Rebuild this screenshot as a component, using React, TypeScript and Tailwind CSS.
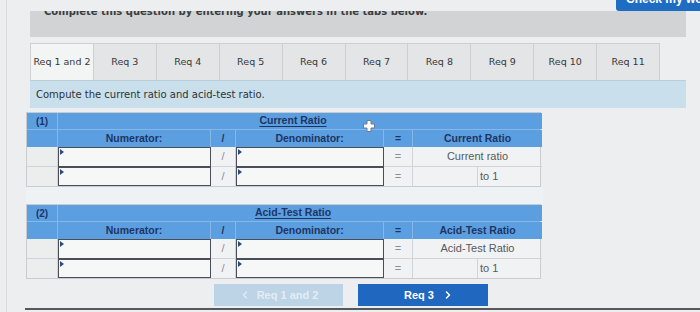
import { ChevronLeft, ChevronRight } from "lucide-react"

const tabs = ["Req 1 and 2", "Req 3", "Req 4", "Req 5", "Req 6", "Req 7", "Req 8", "Req 9", "Req 10", "Req 11"]

const cols = "grid grid-cols-[31px_153px_25px_148px_29px_65px_64px]"

function Field() {
  return (
    <div className="relative h-full border-[1.5px] border-[#4a4f57] bg-[#f6f7f7]">
      <span className="absolute left-[1px] top-[1px] h-0 w-0 border-y-[3px] border-l-[4px] border-y-transparent border-l-[#2d4a80]" />
    </div>
  )
}

function PlusIcon() {
  return (
    <svg width="14" height="14" viewBox="0 0 14 14">
      <path
        d="M5 1.5h4v3.5h3.5v4H9v3.5H5V9H1.5V5H5z"
        fill="#ffffff"
        stroke="#6b7e95"
        strokeWidth="1"
        strokeLinejoin="round"
      />
    </svg>
  )
}

function RatioTable({ num, title, result, plus }: { num: string; title: string; result: string; plus?: boolean }) {
  const head = "flex items-center justify-center bg-[#5c9fe0] text-[10.5px] font-bold text-[#1c3564]"
  const cell = "flex items-center justify-center border-r border-b border-[#cfd4d8] text-[11px] text-[#8b8f94]"
  return (
    <div className="relative w-[515px] border border-[#c7ccd1] font-['Liberation_Sans',Arial,sans-serif]">
      <div className={`${cols} h-[16px]`}>
        <div className={`${head} border-r border-[#86b7e8] text-[10px]`}>{num}</div>
        <div className={`${head} col-span-6`}>
          <span className="ml-[-14px] underline underline-offset-2">{title}</span>
        </div>
      </div>
      <div className={`${cols} h-[18px] border-t border-[#86b7e8]`}>
        <div className={`${head} border-r border-[#86b7e8]`} />
        <div className={`${head} border-r border-[#86b7e8]`}>Numerator:</div>
        <div className={`${head} border-r border-[#86b7e8]`}>/</div>
        <div className={`${head} border-r border-[#86b7e8]`}>Denominator:</div>
        <div className={`${head} border-r border-[#86b7e8]`}>=</div>
        <div className={`${head} col-span-2`}>{title}</div>
      </div>
      <div className={`${cols} h-[20px] bg-[#f1f2f3]`}>
        <div className="border-r border-b border-[#cfd4d8] bg-[#eceded]" />
        <Field />
        <div className={cell}>/</div>
        <Field />
        <div className={cell}>=</div>
        <div className="col-span-2 flex items-center justify-center border-b border-[#cfd4d8] text-[11px] text-[#555a60]">
          {result}
        </div>
      </div>
      <div className={`${cols} h-[19px] bg-[#f1f2f3]`}>
        <div className="border-r border-[#cfd4d8] bg-[#eceded]" />
        <Field />
        <div className="flex items-center justify-center border-r border-[#cfd4d8] text-[11px] text-[#8b8f94]">/</div>
        <Field />
        <div className="flex items-center justify-center border-r border-[#cfd4d8] text-[11px] text-[#8b8f94]">=</div>
        <div className="border-r border-[#cfd4d8]" />
        <div className="flex items-center pl-[2px] text-[11px] text-[#555a60]">to 1</div>
      </div>
      {plus && (
        <div className="absolute left-[335px] top-[6px]">
          <PlusIcon />
        </div>
      )}
    </div>
  )
}

export default function App() {
  return (
    <div className="relative h-[312px] w-[700px] overflow-hidden bg-[#eceeef] font-['DejaVu_Sans',Verdana,sans-serif]">
      <div className="absolute left-[6px] top-0 h-full w-px bg-[#dadcdd]" />

      <div className="flex h-[11px] w-[800px]">
        <button className="-mt-[13px] ml-[616px] h-[24px] w-[100px] rounded-[3px] bg-[#1f6cc3] pl-[10px] text-left font-['Liberation_Sans',Arial,sans-serif] text-[12px] font-bold text-white">
          Check my work
        </button>
      </div>

      <div className="ml-[30px] mr-[14px] h-[26px] overflow-hidden bg-[#d2d3d4]">
        <p className="-mt-[5px] whitespace-nowrap pl-[14px] text-[10px] font-bold leading-[12px] text-[#3a3d40]">
          Complete this question by entering your answers in the tabs below.
        </p>
      </div>

      <div className="ml-[30px] mt-[6px] flex h-[37px] w-[630px]">
        {tabs.map((t, i) => (
          <div
            key={t}
            className={`flex flex-1 items-center justify-center border-t border-r border-[#cdd0d2] text-[9.5px] text-[#35383b] ${
              i === 0 ? "border-l bg-[#f3f4f4]" : "bg-[#e3e5e6]"
            }`}
          >
            {t}
          </div>
        ))}
      </div>

      <div className="ml-[30px] mr-[14px] flex h-[28px] items-center border-t border-[#b7cfdd] bg-[#c9dfeb] pl-[6px] text-[10px] text-[#2f3336]">
        Compute the current ratio and acid-test ratio.
      </div>

      <div className="ml-[26px] mt-[4px] flex w-[517px] flex-col">
        <RatioTable num="(1)" title="Current Ratio" result="Current ratio" plus />
        <div className="h-[17px] bg-[#eef2f4]" />
        <RatioTable num="(2)" title="Acid-Test Ratio" result="Acid-Test Ratio" />
      </div>

      <div className="ml-[214px] mt-[5px] flex gap-[15px] font-['Liberation_Sans',Arial,sans-serif]">
        <button className="flex h-[22px] w-[129px] items-center justify-center gap-[6px] bg-[#bcd4e6] text-[11px] font-bold text-[#e3edf5]">
          <ChevronLeft size={12} strokeWidth={2.5} />
          Req 1 and 2
        </button>
        <button className="flex h-[22px] w-[130px] items-center justify-center gap-[8px] bg-[#1f67bf] pl-[12px] text-[11px] font-bold text-white">
          Req 3
          <ChevronRight size={12} strokeWidth={3} />
        </button>
      </div>

      <div className="ml-[25px] mt-[2px] h-[2px] bg-[#55595d]" />
    </div>
  )
}
